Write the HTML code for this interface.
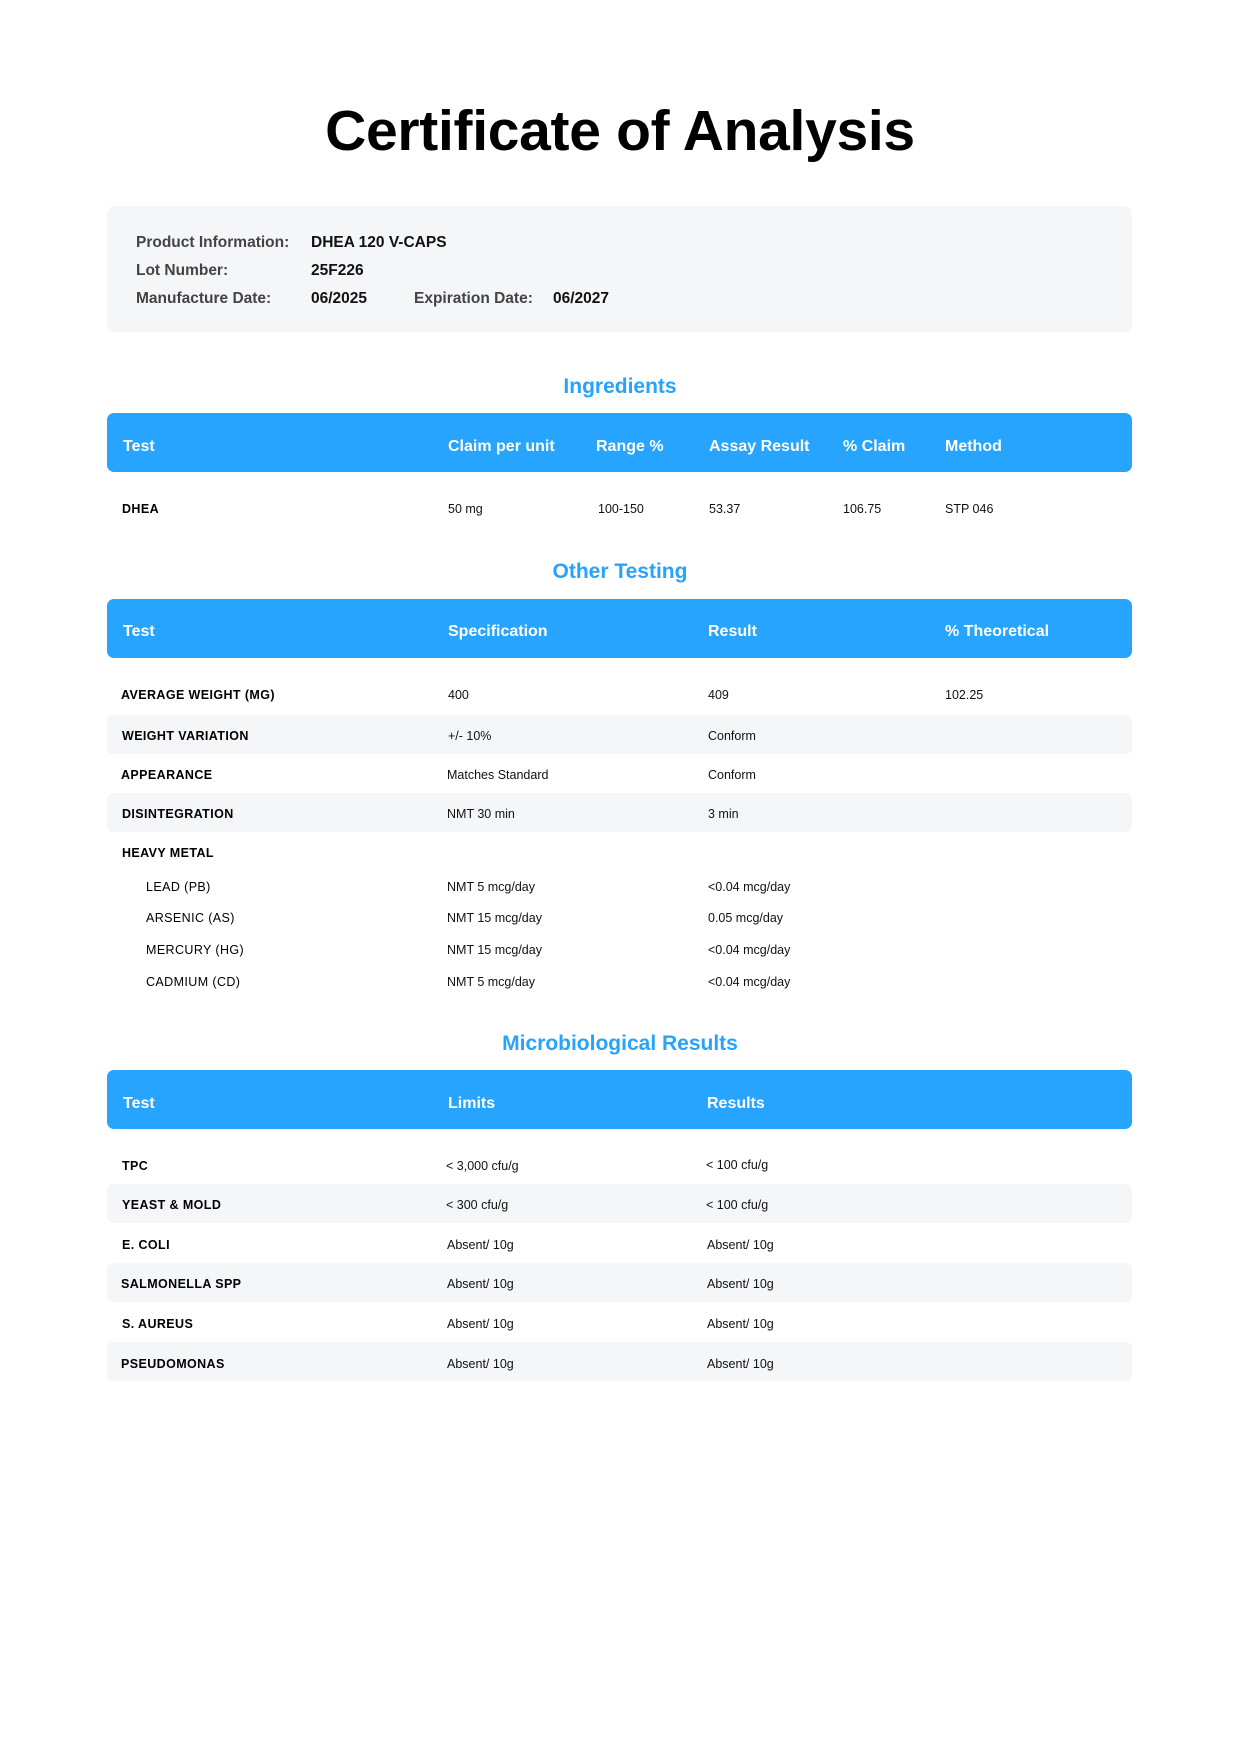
<!DOCTYPE html>
<html><head><meta charset="utf-8"><style>
*{margin:0;padding:0;box-sizing:border-box}
body{width:1240px;height:1754px;background:#fff;font-family:"Liberation Sans",Arial,sans-serif;color:#000;position:relative;overflow:hidden}
.a{position:absolute;white-space:nowrap}
.t{transform:translateY(calc(-50% + 2px))}
h1{position:absolute;left:0;width:1240px;top:131px;transform:translateY(-50%);text-align:center;font-size:57px;font-weight:bold;letter-spacing:-0.3px}
.box{position:absolute;left:107px;width:1025px;top:206px;height:126px;background:#f5f6f8;border-radius:8px}
.lab{font-size:15.5px;color:#444;font-weight:bold}
.val{font-size:15.5px;font-weight:bold;color:#111}
.sec{position:absolute;left:0;width:1240px;text-align:center;color:#27a3fd;font-size:21px;font-weight:bold;transform:translateY(calc(-50% + 2px))}
.hd{position:absolute;left:107px;width:1025px;height:59px;background:#27a4fd;border-radius:7px}
.ht{color:#fff;font-size:16px;font-weight:bold}
.sh{position:absolute;left:107px;width:1025px;height:39px;background:#f5f6f8;border-radius:6px}
.rl{font-size:12.5px;font-weight:bold;letter-spacing:0.4px}
.rv{font-size:12.5px;color:#111}
.sub{font-size:12.5px;letter-spacing:0.4px}
</style></head><body>
<h1>Certificate of Analysis</h1>
<div class="box"></div>
<div class="a t lab" style="left:136px;top:241px">Product Information:</div>
<div class="a t val" style="left:311px;top:241px">DHEA 120 V-CAPS</div>
<div class="a t lab" style="left:136px;top:269px">Lot Number:</div>
<div class="a t val" style="left:311px;top:269px">25F226</div>
<div class="a t lab" style="left:136px;top:297px">Manufacture Date:</div>
<div class="a t val" style="left:311px;top:297px">06/2025</div>
<div class="a t lab" style="left:414px;top:297px">Expiration Date:</div>
<div class="a t val" style="left:553px;top:297px">06/2027</div>

<div class="sec" style="top:385px">Ingredients</div>
<div class="hd" style="top:413px"></div>
<div class="a t ht" style="left:123px;top:445px">Test</div>
<div class="a t ht" style="left:448px;top:445px">Claim per unit</div>
<div class="a t ht" style="left:596px;top:445px">Range %</div>
<div class="a t ht" style="left:709px;top:445px">Assay Result</div>
<div class="a t ht" style="left:843px;top:445px">% Claim</div>
<div class="a t ht" style="left:945px;top:445px">Method</div>
<div class="a t rl" style="left:122px;top:507px">DHEA</div>
<div class="a t rv" style="left:448px;top:507px">50 mg</div>
<div class="a t rv" style="left:598px;top:507px">100-150</div>
<div class="a t rv" style="left:709px;top:507px">53.37</div>
<div class="a t rv" style="left:843px;top:507px">106.75</div>
<div class="a t rv" style="left:945px;top:507px">STP 046</div>

<div class="sec" style="top:570px">Other Testing</div>
<div class="hd" style="top:599px"></div>
<div class="a t ht" style="left:123px;top:630px">Test</div>
<div class="a t ht" style="left:448px;top:630px">Specification</div>
<div class="a t ht" style="left:708px;top:630px">Result</div>
<div class="a t ht" style="left:945px;top:630px">% Theoretical</div>
<div class="sh" style="top:715px"></div>
<div class="sh" style="top:793px"></div>
<div class="a t rl" style="left:121px;top:693px">AVERAGE WEIGHT (MG)</div>
<div class="a t rv" style="left:448px;top:693px">400</div>
<div class="a t rv" style="left:708px;top:693px">409</div>
<div class="a t rv" style="left:945px;top:693px">102.25</div>
<div class="a t rl" style="left:122px;top:734px">WEIGHT VARIATION</div>
<div class="a t rv" style="left:448px;top:734px">+/- 10%</div>
<div class="a t rv" style="left:708px;top:734px">Conform</div>
<div class="a t rl" style="left:121px;top:773px">APPEARANCE</div>
<div class="a t rv" style="left:447px;top:773px">Matches Standard</div>
<div class="a t rv" style="left:708px;top:773px">Conform</div>
<div class="a t rl" style="left:122px;top:812px">DISINTEGRATION</div>
<div class="a t rv" style="left:447px;top:812px">NMT 30 min</div>
<div class="a t rv" style="left:708px;top:812px">3 min</div>
<div class="a t rl" style="left:122px;top:851px">HEAVY METAL</div>
<div class="a t sub" style="left:146px;top:885px">LEAD (PB)</div>
<div class="a t rv" style="left:447px;top:885px">NMT 5 mcg/day</div>
<div class="a t rv" style="left:708px;top:885px">&lt;0.04 mcg/day</div>
<div class="a t sub" style="left:146px;top:916px">ARSENIC (AS)</div>
<div class="a t rv" style="left:447px;top:916px">NMT 15 mcg/day</div>
<div class="a t rv" style="left:708px;top:916px">0.05 mcg/day</div>
<div class="a t sub" style="left:146px;top:948px">MERCURY (HG)</div>
<div class="a t rv" style="left:447px;top:948px">NMT 15 mcg/day</div>
<div class="a t rv" style="left:708px;top:948px">&lt;0.04 mcg/day</div>
<div class="a t sub" style="left:146px;top:980px">CADMIUM (CD)</div>
<div class="a t rv" style="left:447px;top:980px">NMT 5 mcg/day</div>
<div class="a t rv" style="left:708px;top:980px">&lt;0.04 mcg/day</div>

<div class="sec" style="top:1042px">Microbiological Results</div>
<div class="hd" style="top:1070px"></div>
<div class="a t ht" style="left:123px;top:1102px">Test</div>
<div class="a t ht" style="left:448px;top:1102px">Limits</div>
<div class="a t ht" style="left:707px;top:1102px">Results</div>
<div class="sh" style="top:1184px"></div>
<div class="sh" style="top:1263px"></div>
<div class="sh" style="top:1342px"></div>
<div class="a t rl" style="left:122px;top:1164px">TPC</div>
<div class="a t rv" style="left:446px;top:1164px">&lt; 3,000 cfu/g</div>
<div class="a t rv" style="left:706px;top:1163px">&lt; 100 cfu/g</div>
<div class="a t rl" style="left:122px;top:1203px">YEAST &amp; MOLD</div>
<div class="a t rv" style="left:446px;top:1203px">&lt; 300 cfu/g</div>
<div class="a t rv" style="left:706px;top:1203px">&lt; 100 cfu/g</div>
<div class="a t rl" style="left:122px;top:1243px">E. COLI</div>
<div class="a t rv" style="left:447px;top:1243px">Absent/ 10g</div>
<div class="a t rv" style="left:707px;top:1243px">Absent/ 10g</div>
<div class="a t rl" style="left:121px;top:1282px">SALMONELLA SPP</div>
<div class="a t rv" style="left:447px;top:1282px">Absent/ 10g</div>
<div class="a t rv" style="left:707px;top:1282px">Absent/ 10g</div>
<div class="a t rl" style="left:122px;top:1322px">S. AUREUS</div>
<div class="a t rv" style="left:447px;top:1322px">Absent/ 10g</div>
<div class="a t rv" style="left:707px;top:1322px">Absent/ 10g</div>
<div class="a t rl" style="left:121px;top:1362px">PSEUDOMONAS</div>
<div class="a t rv" style="left:447px;top:1362px">Absent/ 10g</div>
<div class="a t rv" style="left:707px;top:1362px">Absent/ 10g</div>
</body></html>
